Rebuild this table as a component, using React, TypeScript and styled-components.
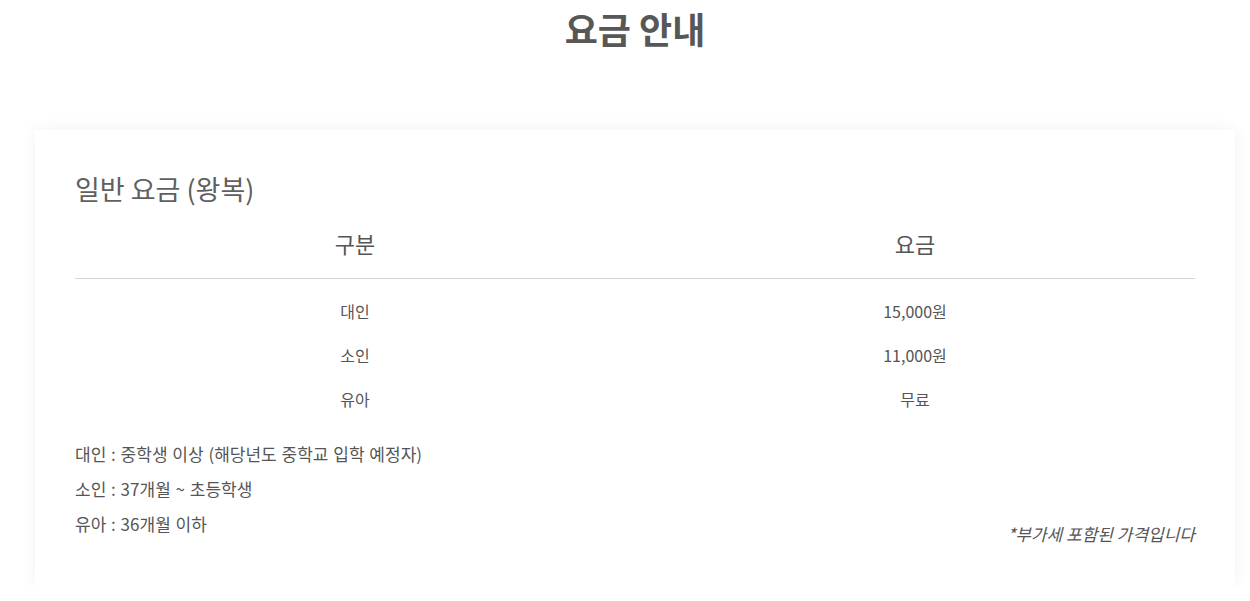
import styled, { createGlobalStyle } from "styled-components"

const GlobalStyle = createGlobalStyle`
  html, body {
    margin: 0;
    padding: 0;
    background: #ffffff;
  }
  body {
    font-family: "Noto Sans CJK KR", "Noto Sans", sans-serif;
    color: #555555;
  }
`

const Page = styled.div`
  width: 1250px;
  padding: 0 15px 0 35px;
  box-sizing: border-box;
`

const PageTitle = styled.h1`
  margin: 0;
  padding-top: 4px;
  height: 130px;
  box-sizing: border-box;
  text-align: center;
  font-size: 36px;
  font-weight: 700;
  line-height: 48px;
  color: #575757;
`

const Card = styled.section`
  width: 1200px;
  box-sizing: border-box;
  padding: 40px 40px 45px;
  background: #ffffff;
  box-shadow: 0 0 16px rgba(0, 0, 0, 0.06);
`

const SectionTitle = styled.h2`
  margin: 0;
  font-size: 27px;
  font-weight: 400;
  line-height: 38px;
  color: #606060;
`

const PriceTable = styled.table`
  width: 100%;
  border-collapse: collapse;
  table-layout: fixed;
`

const HeadCell = styled.th`
  font-size: 22px;
  font-weight: 400;
  height: 70px;
  padding: 0;
  color: #555555;
  border-bottom: 1px solid #d5d5d5;
  vertical-align: middle;
`

const BodyCell = styled.td<{ $first?: boolean }>`
  text-align: center;
  font-size: 16px;
  height: 44px;
  padding: ${(props) => (props.$first ? "10px 0 0" : "0")};
  color: #555555;
  vertical-align: middle;
`

const NotesRow = styled.div`
  display: flex;
  justify-content: space-between;
  align-items: flex-end;
  margin-top: 15px;
`

const NoteList = styled.ul`
  list-style: none;
  margin: 0;
  padding: 0;
`

const Note = styled.li`
  font-size: 17px;
  line-height: 35px;
  word-spacing: 1px;
  color: #555555;
`

const VatNote = styled.p`
  margin: 0 0 -10px;
  font-size: 17px;
  font-style: italic;
  line-height: 35px;
  color: #555555;
`

const rows = [
  { id: "adult", label: "대인", price: "15,000원" },
  { id: "child", label: "소인", price: "11,000원" },
  { id: "infant", label: "유아", price: "무료" },
]

const App = () => {
  return (
    <Page>
      <GlobalStyle />
      <PageTitle>요금 안내</PageTitle>
      <Card>
        <SectionTitle>일반 요금 (왕복)</SectionTitle>
        <PriceTable>
          <thead>
            <tr>
              <HeadCell>구분</HeadCell>
              <HeadCell>요금</HeadCell>
            </tr>
          </thead>
          <tbody>
            {rows.map((row, i) => (
              <tr key={row.id}>
                <BodyCell $first={i === 0}>{row.label}</BodyCell>
                <BodyCell $first={i === 0}>{row.price}</BodyCell>
              </tr>
            ))}
          </tbody>
        </PriceTable>
        <NotesRow>
          <NoteList>
            <Note>대인 : 중학생 이상 (해당년도 중학교 입학 예정자)</Note>
            <Note>소인 : 37개월 ~ 초등학생</Note>
            <Note>유아 : 36개월 이하</Note>
          </NoteList>
          <VatNote>*부가세 포함된 가격입니다</VatNote>
        </NotesRow>
      </Card>
    </Page>
  )
}

export default App
